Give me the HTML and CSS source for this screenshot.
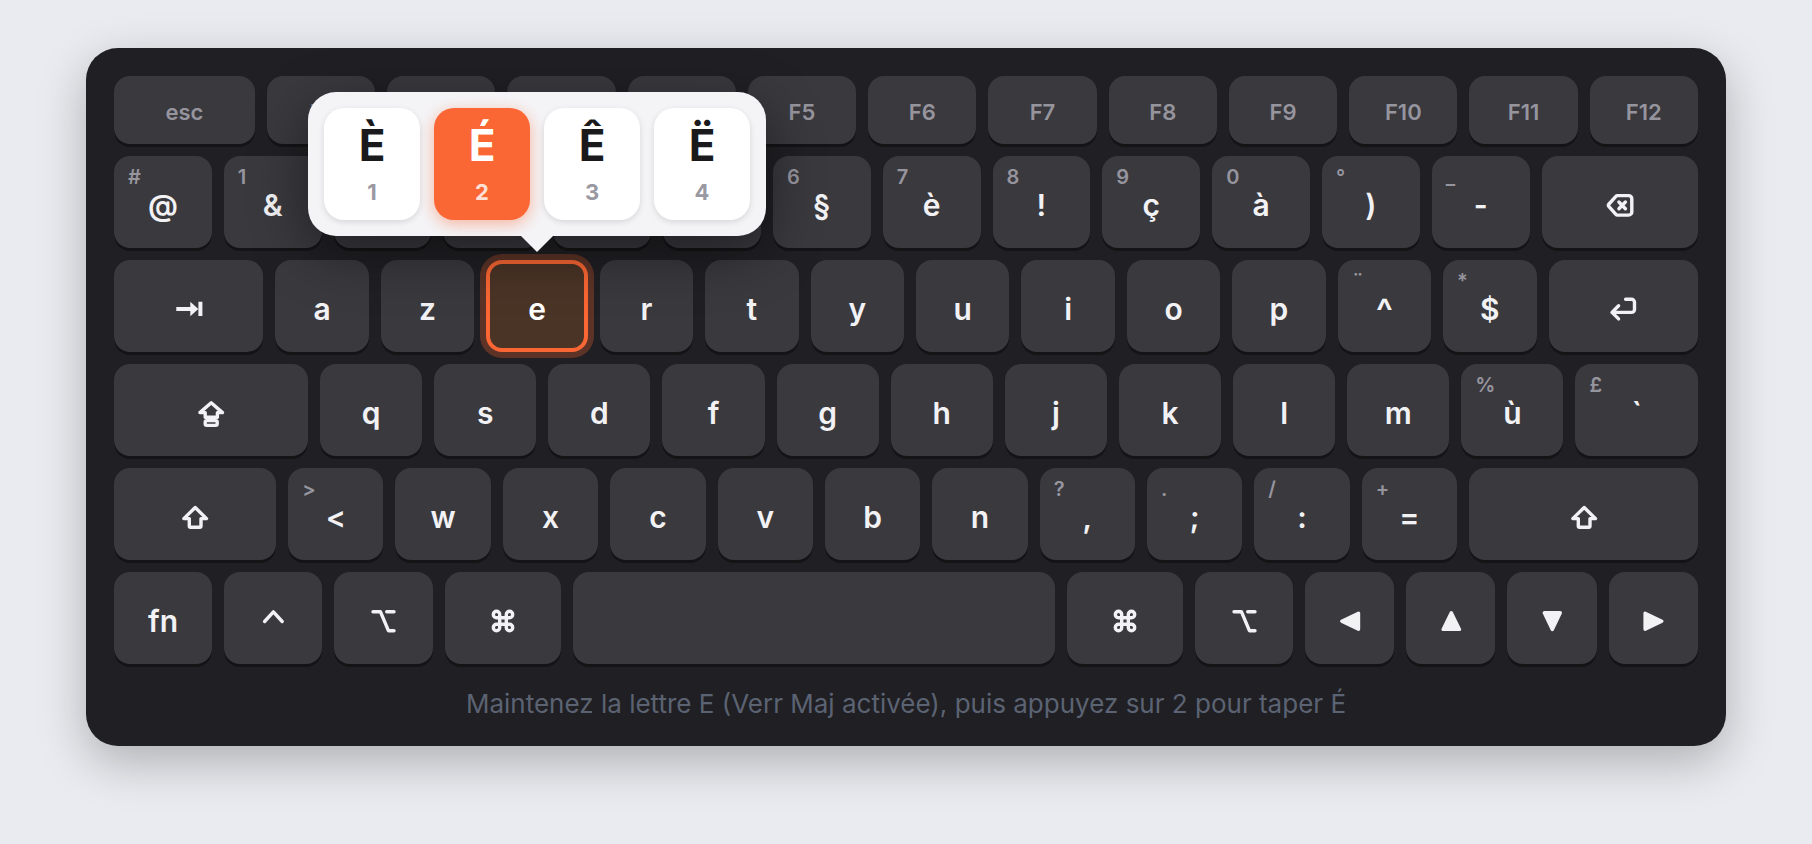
FILE: index.html
```html
<!DOCTYPE html>
<html lang="fr">
<head>
<meta charset="utf-8">
<meta name="viewport" content="width=device-width, initial-scale=1">
<title>Clavier français</title>
<link rel="stylesheet" href="styles.css">
</head>
<body>
<svg class="sprite" aria-hidden="true">
  <symbol id="i-backspace" viewBox="0 0 32 32"><path d="M13.4 6.600H24.600a3.200 3.200 0 0 1 3.200 3.200V22.900a3.200 3.200 0 0 1-3.200 3.200H13.400a2 2 0 0 1-1.500-.7L5 17.700a2 2 0 0 1 0-2.700l6.900-7.700a2 2 0 0 1 1.500-.7zM14.900 13l6.500 6.700M21.400 13l-6.500 6.700"/></symbol>
  <symbol id="i-return" viewBox="0 0 32 32"><path d="M18.600 6.200H24.500a3 3 0 0 1 3 3V16.400a3 3 0 0 1-3 3H5M11.600 12.800L5 19.400l6.600 6.500"/></symbol>
  <symbol id="i-tab" viewBox="0 0 32 32"><path class="solid" d="M3.300 14.100h14V8.700l8 7.300-8 7.300v-5.200h-14zM25.400 8.700h4v14.300h-4z"/></symbol>
  <symbol id="i-caps" viewBox="0 0 32 32"><path d="M16.200 5.800L27.500 15.600H22.400V20.200H10.200V15.600H4.900z"/><rect x="10.200" y="23.600" width="12" height="4.800" rx="1.600"/></symbol>
  <symbol id="i-shift" viewBox="0 0 32 32"><path d="M16.200 6.500L27.500 17.600H22V25a1.200 1.200 0 0 1-1.200 1.200H11.500A1.200 1.200 0 0 1 10.300 25V17.600H4.800z"/></symbol>
  <symbol id="i-ctrl" viewBox="0 0 32 32"><path d="M7.600 16.500L16.400 6.900l8.800 9.600"/></symbol>
  <symbol id="i-option" viewBox="0 0 32 32"><path d="M6 6.700h7.400l8 19H27M19.700 6.700H27"/></symbol>
  <symbol id="i-command" viewBox="0 0 32 32"><path d="M19.300 9.500V22.500a3.200 3.200 0 1 0 3.200-3.200H9.500a3.200 3.200 0 1 0 3.200 3.200V9.500a3.200 3.200 0 1 0-3.200 3.200H22.500a3.200 3.200 0 1 0-3.200-3.200z"/></symbol>
  <symbol id="i-left" viewBox="0 0 32 32"><path class="round" d="M7.800 16.300L24.500 8.300v16z"/></symbol>
  <symbol id="i-up" viewBox="0 0 32 32"><path class="round" d="M16.300 7.700L8.100 24.400h16.400z"/></symbol>
  <symbol id="i-down" viewBox="0 0 32 32"><path class="round" d="M16.300 24.400L8.300 7.700h16z"/></symbol>
  <symbol id="i-right" viewBox="0 0 32 32"><path class="round" d="M24.800 16.300L8.100 8.300v16z"/></symbol>
</svg>

<main class="keyboard">
  <div class="rows">
    <div class="row row-fn">
      <button class="key w13">esc</button>
      <button class="key">F1</button>
      <button class="key">F2</button>
      <button class="key">F3</button>
      <button class="key">F4</button>
      <button class="key">F5</button>
      <button class="key">F6</button>
      <button class="key">F7</button>
      <button class="key">F8</button>
      <button class="key">F9</button>
      <button class="key">F10</button>
      <button class="key">F11</button>
      <button class="key">F12</button>
    </div>
    <div class="row">
      <button class="key"><span class="alt">#</span>@</button>
      <button class="key"><span class="alt">1</span>&amp;</button>
      <button class="key"><span class="alt">2</span>é</button>
      <button class="key"><span class="alt">3</span>"</button>
      <button class="key"><span class="alt">4</span>'</button>
      <button class="key"><span class="alt">5</span>(</button>
      <button class="key"><span class="alt">6</span>§</button>
      <button class="key"><span class="alt">7</span>è</button>
      <button class="key"><span class="alt">8</span>!</button>
      <button class="key"><span class="alt">9</span>ç</button>
      <button class="key"><span class="alt">0</span>à</button>
      <button class="key"><span class="alt">°</span>)</button>
      <button class="key"><span class="alt">_</span>-</button>
      <button class="key w16" aria-label="Effacer"><svg class="icon"><use href="#i-backspace"/></svg></button>
    </div>
    <div class="row">
      <button class="key w16" aria-label="Tabulation"><svg class="icon"><use href="#i-tab"/></svg></button>
      <button class="key">a</button>
      <button class="key">z</button>
      <div class="held">
        <button class="key key-active">e</button>
        <div class="popup">
          <button class="accent">È<span class="num">1</span></button>
          <button class="accent accent-selected">É<span class="num">2</span></button>
          <button class="accent">Ê<span class="num">3</span></button>
          <button class="accent">Ë<span class="num">4</span></button>
        </div>
      </div>
      <button class="key">r</button>
      <button class="key">t</button>
      <button class="key">y</button>
      <button class="key">u</button>
      <button class="key">i</button>
      <button class="key">o</button>
      <button class="key">p</button>
      <button class="key key-caret"><span class="alt">¨</span>^</button>
      <button class="key"><span class="alt">*</span>$</button>
      <button class="key w16" aria-label="Entrée"><svg class="icon"><use href="#i-return"/></svg></button>
    </div>
    <div class="row">
      <button class="key w19" aria-label="Verr Maj"><svg class="icon"><use href="#i-caps"/></svg></button>
      <button class="key">q</button>
      <button class="key">s</button>
      <button class="key">d</button>
      <button class="key">f</button>
      <button class="key">g</button>
      <button class="key">h</button>
      <button class="key">j</button>
      <button class="key">k</button>
      <button class="key">l</button>
      <button class="key">m</button>
      <button class="key"><span class="alt">%</span>ù</button>
      <button class="key w12"><span class="alt">£</span>`</button>
    </div>
    <div class="row">
      <button class="key w17" aria-label="Maj gauche"><svg class="icon"><use href="#i-shift"/></svg></button>
      <button class="key"><span class="alt">&gt;</span>&lt;</button>
      <button class="key">w</button>
      <button class="key">x</button>
      <button class="key">c</button>
      <button class="key">v</button>
      <button class="key">b</button>
      <button class="key">n</button>
      <button class="key"><span class="alt">?</span>,</button>
      <button class="key"><span class="alt">.</span>;</button>
      <button class="key"><span class="alt">/</span>:</button>
      <button class="key"><span class="alt">+</span>=</button>
      <button class="key w24" aria-label="Maj droite"><svg class="icon"><use href="#i-shift"/></svg></button>
    </div>
    <div class="row">
      <button class="key w11">fn</button>
      <button class="key w11" aria-label="Contrôle"><svg class="icon"><use href="#i-ctrl"/></svg></button>
      <button class="key w11" aria-label="Option gauche"><svg class="icon"><use href="#i-option"/></svg></button>
      <button class="key w13" aria-label="Commande gauche"><svg class="icon"><use href="#i-command"/></svg></button>
      <button class="key w54" aria-label="Espace"></button>
      <button class="key w13" aria-label="Commande droite"><svg class="icon"><use href="#i-command"/></svg></button>
      <button class="key w11" aria-label="Option droite"><svg class="icon"><use href="#i-option"/></svg></button>
      <button class="key" aria-label="Gauche"><svg class="icon"><use href="#i-left"/></svg></button>
      <button class="key" aria-label="Haut"><svg class="icon"><use href="#i-up"/></svg></button>
      <button class="key" aria-label="Bas"><svg class="icon"><use href="#i-down"/></svg></button>
      <button class="key" aria-label="Droite"><svg class="icon"><use href="#i-right"/></svg></button>
    </div>
  </div>
  <p class="hint">Maintenez la lettre E (Verr Maj activée), puis appuyez sur 2 pour taper É</p>
</main>
</body>
</html>
```
FILE: styles.css
```css
* {
  box-sizing: border-box;
}

body {
  min-height: 100vh;
  margin: 0;
  padding: 48px 24px;
  background: #e9ebf0;
  font-family: Inter, "Liberation Sans", sans-serif;
}

button {
  margin: 0;
  border: 0;
  font-family: inherit;
  cursor: pointer;
}

.sprite {
  position: absolute;
  width: 0;
  height: 0;
}

.keyboard {
  max-width: 1640px;
  margin: 0 auto;
  padding: 28px;
  border-radius: 32px;
  background: #201f23;
  box-shadow: 0 16px 48px rgba(0, 0, 0, 0.25);
}

.rows {
  display: flex;
  flex-direction: column;
  gap: 12px;
}

.row {
  display: flex;
  gap: 12px;
}

.key {
  position: relative;
  display: flex;
  flex: 1 1 0;
  align-items: center;
  justify-content: center;
  min-width: 0;
  height: 92px;
  padding: 6px 0 0;
  border-radius: 16px;
  background: #3a393e;
  box-shadow: 0 3px 0 #141416;
  color: #f2f2f5;
  font-size: 30px;
  font-weight: 600;
  line-height: 36px;
}

.row-fn .key {
  height: 68px;
  padding-top: 4px;
  color: #96959e;
  font-size: 22px;
  line-height: 26px;
}

.key-caret {
  padding-top: 10px;
  font-size: 36px;
}

.w11 { flex-grow: 1.1; }
.w12 { flex-grow: 1.2; }
.w13 { flex-grow: 1.3; }
.w16 { flex-grow: 1.6; }
.w17 { flex-grow: 1.7; }
.w19 { flex-grow: 1.9; }
.w24 { flex-grow: 2.4; }
.w54 { flex-grow: 5.4; }

.alt {
  position: absolute;
  top: 9px;
  left: 14px;
  color: #96959e;
  font-size: 20px;
  line-height: 24px;
}

.icon {
  width: 32px;
  height: 32px;
  fill: none;
  stroke: currentColor;
  stroke-width: 3.4;
  stroke-linecap: round;
  stroke-linejoin: round;
}

.solid {
  fill: currentColor;
  stroke: none;
}

.round {
  fill: currentColor;
}

.held {
  position: relative;
  z-index: 1;
  flex: 1 1 8px;
  min-width: 0;
}

.key-active {
  width: 100%;
  border: 4px solid #fb6734;
  background: #4a3426;
  box-shadow: 0 0 0 6px rgba(251, 103, 52, 0.28);
  color: #ffffff;
}

.popup {
  position: absolute;
  bottom: calc(100% + 24px);
  left: 50%;
  display: flex;
  gap: 14px;
  padding: 16px;
  border-radius: 28px;
  background: #f4f4f7;
  box-shadow: 0 16px 56px rgba(0, 0, 0, 0.45);
  transform: translateX(-50%);
}

.popup::after {
  content: "";
  position: absolute;
  top: 100%;
  left: 50%;
  margin-left: -16px;
  border: 16px solid transparent;
  border-top-color: #f4f4f7;
  border-bottom-width: 0;
}

.accent {
  display: flex;
  flex-direction: column;
  align-items: center;
  gap: 6px;
  width: 96px;
  height: 112px;
  padding: 10px 0;
  border-radius: 20px;
  background: #ffffff;
  box-shadow: 0 2px 6px rgba(0, 0, 0, 0.12);
  color: #1a1a1c;
  font-size: 44px;
  font-weight: 700;
  line-height: 54px;
}

.num {
  color: #9a99a2;
  font-size: 22px;
  line-height: 28px;
}

.accent-selected {
  background: #fb6734;
  box-shadow: 0 4px 16px rgba(251, 103, 52, 0.45);
  color: #ffffff;
}

.accent-selected .num {
  color: #ffe0d6;
}

.hint {
  margin: 26px 0 0;
  color: #5b6373;
  font-size: 26px;
  line-height: 28px;
  text-align: center;
}
```
